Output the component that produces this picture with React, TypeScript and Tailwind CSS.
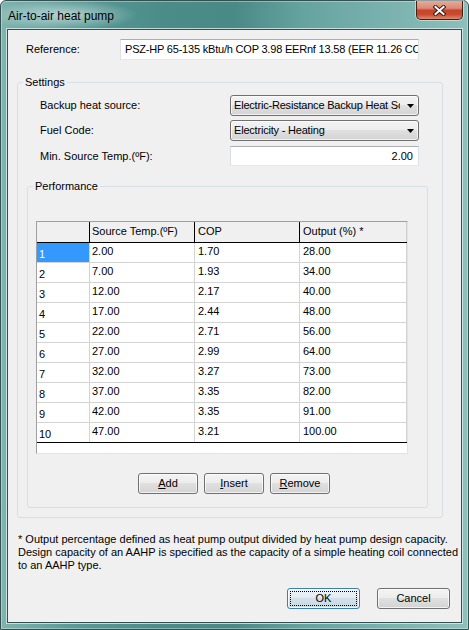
import React from "react";

const rows = [
  ["2.00", "1.70", "28.00"],
  ["7.00", "1.93", "34.00"],
  ["12.00", "2.17", "40.00"],
  ["17.00", "2.44", "48.00"],
  ["22.00", "2.71", "56.00"],
  ["27.00", "2.99", "64.00"],
  ["32.00", "3.27", "73.00"],
  ["37.00", "3.35", "82.00"],
  ["42.00", "3.35", "91.00"],
  ["47.00", "3.21", "100.00"],
];

function Combo({ value }: { value: string }) {
  return (
    <div className="w-[189px] h-[21px] rounded-[3px] border border-[#707070] bg-[linear-gradient(#f3f3f3_0%,#ececec_50%,#e0e0e0_50%,#d3d3d3_100%)] shadow-[inset_0_0_0_1px_rgba(255,255,255,0.7)] flex items-center pl-[3px] pr-[4px]">
      <span className="w-[166px] overflow-hidden whitespace-nowrap tracking-[-0.2px]">{value}</span>
      <svg className="ml-auto" width="7" height="4" viewBox="0 0 7 4">
        <path d="M0 0h7L3.5 4z" fill="#000" />
      </svg>
    </div>
  );
}

function Button({ children, w, isDefault }: { children: React.ReactNode; w: string; isDefault?: boolean }) {
  return (
    <div
      className={
        w +
        " h-[21px] rounded-[3px] border flex items-center justify-center " +
        (isDefault
          ? "border-[#3c7fb1] bg-[linear-gradient(#eef4f8_0%,#e2ebf1_50%,#d3e0e9_50%,#c8d8e3_100%)] shadow-[inset_0_0_0_1px_rgba(255,255,255,0.8)] outline-1 outline-dotted outline-black outline-offset-[-4px]"
          : "border-[#707070] bg-[linear-gradient(#f3f3f3_0%,#ececec_50%,#e0e0e0_50%,#d3d3d3_100%)] shadow-[inset_0_0_0_1px_rgba(255,255,255,0.7)]")
      }
    >
      <span>{children}</span>
    </div>
  );
}

function CloseButton() {
  return (
    <div className="ml-auto mr-[5px] w-[47px] h-[19px] rounded-b-[5px] border border-t-0 border-[#4a1c12] shadow-[0_0_0_1px_rgba(255,255,255,0.45)] bg-[linear-gradient(#e6aa9a_0%,#d98a74_40%,#c5442a_52%,#c94c2e_75%,#dc8a70_100%)] flex items-center justify-center">
      <svg width="13" height="11" viewBox="0 0 13 11">
        <path d="M2.5 2l8 7M10.5 2l-8 7" stroke="#3b1a12" strokeWidth="4" strokeLinecap="square" />
        <path d="M2.5 2l8 7M10.5 2l-8 7" stroke="#ffffff" strokeWidth="2" strokeLinecap="square" />
      </svg>
    </div>
  );
}

function Grid() {
  return (
    <div className="ml-[8px] mt-[28px] w-[372px] h-[233px] bg-white border border-[#a0a0a0] border-r-[#e3e3e3] border-b-[#e3e3e3] flex flex-col text-[11px]">
      <div className="flex h-[21px] bg-[#f0f0f0] border-b border-black">
        <div className="w-[53px] border-r border-black" />
        <div className="w-[105px] border-r border-black pl-[2px] leading-[19px]">Source Temp.(ºF)</div>
        <div className="w-[105px] border-r border-black pl-[3px] leading-[19px]">COP</div>
        <div className="w-[107px] border-r border-[#d0d0d0] pl-[3px] leading-[19px]">Output (%) *</div>
      </div>
      {rows.map((r, i) => (
        <div
          key={i}
          className={"flex h-[20px] border-b " + (i === rows.length - 1 ? "border-black" : "border-[#d4d4d4]")}
        >
          <div
            className={
              "w-[53px] border-r border-[#d4d4d4] pl-[2px] pt-[3px] leading-[16px] " +
              (i === 0 ? "bg-[#3399ff] text-white" : "")
            }
          >
            {i + 1}
          </div>
          <div className="w-[105px] border-r border-[#d4d4d4] pl-[2px] leading-[17px]">{r[0]}</div>
          <div className="w-[105px] border-r border-[#d4d4d4] pl-[3px] leading-[17px]">{r[1]}</div>
          <div className="w-[107px] border-r border-[#d4d4d4] pl-[3px] leading-[17px]">{r[2]}</div>
        </div>
      ))}
    </div>
  );
}

export default function App() {
  return (
    <div className="w-[469px] h-[630px] font-['Liberation_Sans',Arial,sans-serif] text-[11px] text-black">
      <div className="w-full h-full flex flex-col rounded-t-[6px] border border-[#34514f] shadow-[inset_0_0_0_1px_rgba(255,255,255,0.35)] bg-[linear-gradient(90deg,#7fb4b0_0%,#5a9b97_15%,#4b8c88_35%,#4a8a86_50%,#66a4a0_65%,#8dbfbc_100%)]">
        <div className="h-[28px] flex items-start">
          <div className="h-full w-[150px] flex items-center pl-[7px] pt-[1px] bg-[radial-gradient(ellipse_75px_15px_at_62px_14px,rgba(255,255,255,0.55),rgba(255,255,255,0)_100%)]">
            <span className="text-[12px]">Air-to-air heat pump</span>
          </div>
          <CloseButton />
        </div>
        <div className="flex-1 flex px-[6px] pb-[6px]">
          <div className="flex-1 flex flex-col bg-[#f0f0f0] border border-[#33504e] shadow-[0_0_0_1px_rgba(220,238,236,0.8)]">
            <div className="flex items-center mt-[9px] ml-[18px]">
              <span className="w-[94px]">Reference:</span>
              <div className="w-[299px] h-[21px] bg-white border border-[#dbdfe6] border-t-[#abadb3] border-b-[#e3e9ef] pl-[4px] flex items-center overflow-hidden whitespace-nowrap tracking-[-0.2px]">
                PSZ-HP 65-135 kBtu/h COP 3.98 EERnf 13.58 (EER 11.26 COP 3.40)
              </div>
            </div>

            <fieldset className="mt-[15px] ml-[9px] w-[426px] border border-[#d5dfe5] rounded-[3px] pb-[9px]">
              <legend className="ml-[5px] px-[2px] h-[14px] leading-[14px]">Settings</legend>
              <div className="flex items-center pl-[22px] mt-[6px]">
                <span className="w-[190px]">Backup heat source:</span>
                <Combo value="Electric-Resistance Backup Heat Source" />
              </div>
              <div className="flex items-center pl-[22px] mt-[4px]">
                <span className="w-[190px]">Fuel Code:</span>
                <Combo value="Electricity - Heating" />
              </div>
              <div className="flex items-center pl-[22px] mt-[5px]">
                <span className="w-[190px]">Min. Source Temp.(ºF):</span>
                <div className="w-[189px] h-[20px] bg-white border border-[#dbdfe6] border-t-[#abadb3] border-b-[#e3e9ef] pr-[5px] flex items-center justify-end">
                  2.00
                </div>
              </div>

              <fieldset className="mt-[13px] ml-[9px] w-[401px] border border-[#d5dfe5] rounded-[3px] pb-[13px]">
                <legend className="ml-[5px] px-[2px] h-[14px] leading-[14px]">Performance</legend>
                <Grid />
                <div className="flex gap-[6px] ml-[110px] mt-[19px]">
                  <Button w="w-[60px]">
                    <span className="underline">A</span>dd
                  </Button>
                  <Button w="w-[60px]">
                    <span className="underline">I</span>nsert
                  </Button>
                  <Button w="w-[60px]">
                    <span className="underline">R</span>emove
                  </Button>
                </div>
              </fieldset>
            </fieldset>

            <p className="mt-[15px] ml-[10px] leading-[13px]">
              * Output percentage defined as heat pump output divided by heat pump design capacity.
              <br />
              Design capacity of an AAHP is specified as the capacity of a simple heating coil connected
              <br />
              to an AAHP type.
            </p>

            <div className="flex justify-end gap-[17px] mr-[11px] mt-[16px]">
              <Button w="w-[73px]" isDefault>
                OK
              </Button>
              <Button w="w-[73px]">Cancel</Button>
            </div>
          </div>
        </div>
      </div>
    </div>
  );
}
